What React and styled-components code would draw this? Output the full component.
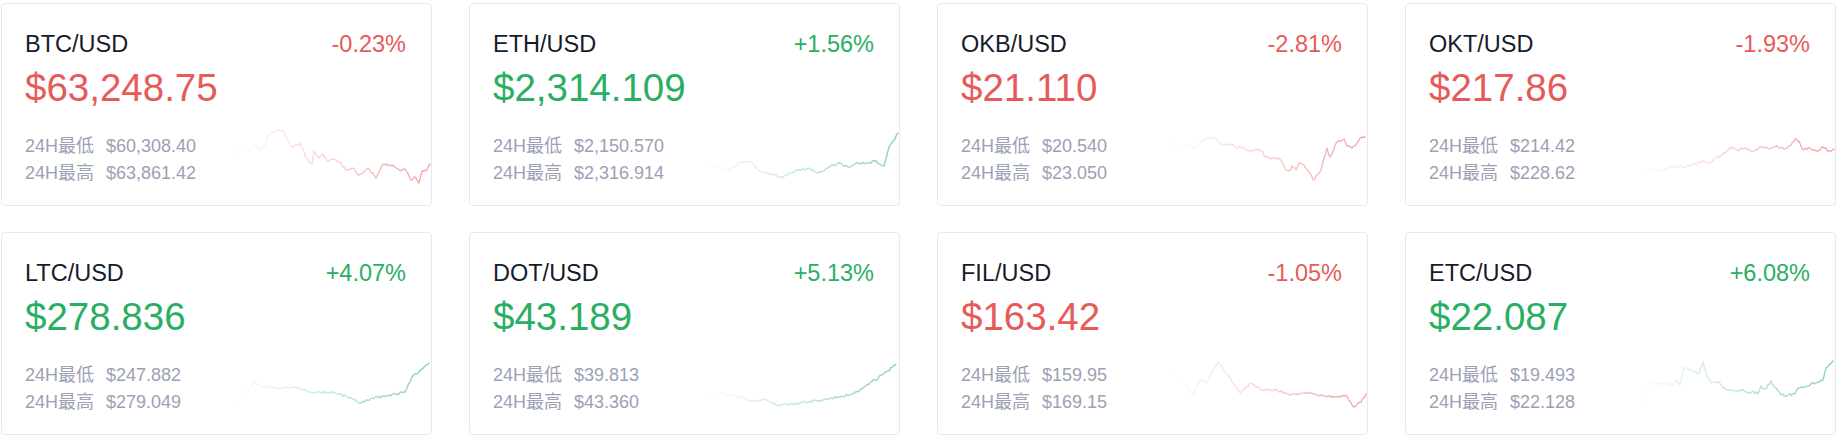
import React from "react";
import styled, { createGlobalStyle } from "styled-components";

const RED = "#e75a5a";
const GREEN = "#2aae64";

const GlobalStyle = createGlobalStyle`
  html, body {
    margin: 0;
    padding: 0;
    background: #ffffff;
  }
  body {
    font-family: "Liberation Sans", "Noto Sans CJK SC", Arial, sans-serif;
  }
`;

const tickers = [
  {
    pair: "BTC/USD", change: "-0.23%", price: "$63,248.75", low: "$60,308.40", high: "$63,861.42", up: false,
    pts: [[0,35],[10,20],[15,19],[20,24],[25,18],[29,24],[33,19],[40,5],[52,3],[58,16],[62,20],[69,16],[76,32],[81,37],[83,24],[88,31],[92,27],[96,34],[103,32],[110,36],[115,43],[122,41],[128,48],[137,41],[145,51],[152,37],[163,39],[170,44],[174,42],[180,53],[184,50],[188,56],[191,44],[195,44],[199,37]],
  },
  {
    pair: "ETH/USD", change: "+1.56%", price: "$2,314.109", low: "$2,150.570", high: "$2,316.914", up: true,
    pts: [[0,41],[15,38],[29,43],[42,35],[52,35],[62,45],[75,48],[82,50],[92,46],[102,43],[109,41],[119,46],[129,41],[139,36],[149,40],[159,36],[172,36],[175,34],[180,37],[185,39],[190,20],[195,13],[199,6]],
  },
  {
    pair: "OKB/USD", change: "-2.81%", price: "$21.110", low: "$20.540", high: "$23.050", up: false,
    pts: [[0,11],[4,20],[7,16],[12,23],[19,21],[22,17],[27,22],[32,16],[39,12],[47,10],[50,12],[54,18],[59,18],[64,17],[69,20],[75,21],[82,24],[89,22],[94,24],[99,30],[105,31],[112,31],[119,43],[124,43],[125,39],[129,43],[132,36],[137,38],[142,45],[146,53],[154,43],[160,21],[163,30],[170,15],[177,12],[180,19],[185,21],[190,16],[195,10],[198,10]],
  },
  {
    pair: "OKT/USD", change: "-1.93%", price: "$217.86", low: "$214.42", high: "$228.62", up: false,
    pts: [[0,46],[12,42],[25,44],[38,39],[50,40],[60,37],[68,34],[75,36],[82,30],[90,26],[96,20],[102,23],[110,21],[118,24],[126,20],[134,22],[142,19],[150,22],[156,18],[160,12],[164,14],[167,22],[175,21],[182,24],[188,20],[194,24],[199,22]],
  },
  {
    pair: "LTC/USD", change: "+4.07%", price: "$278.836", low: "$247.882", high: "$279.049", up: true,
    pts: [[0,54],[9,44],[24,26],[31,31],[42,31],[49,32],[67,32],[83,37],[101,36],[115,40],[130,47],[141,42],[156,40],[174,36],[181,21],[188,16],[198,7]],
  },
  {
    pair: "DOT/USD", change: "+5.13%", price: "$43.189", low: "$39.813", high: "$43.360", up: true,
    pts: [[0,46],[23,37],[37,40],[52,45],[66,43],[77,49],[95,48],[110,46],[124,44],[139,41],[154,38],[165,31],[176,24],[187,16],[197,9]],
  },
  {
    pair: "FIL/USD", change: "-1.05%", price: "$163.42", low: "$159.95", high: "$169.15", up: false,
    pts: [[1,14],[8,21],[15,24],[26,39],[33,24],[40,27],[51,6],[62,21],[73,37],[84,27],[95,34],[110,34],[124,39],[139,37],[154,39],[168,41],[179,39],[187,51],[194,46],[199,38]],
  },
  {
    pair: "ETC/USD", change: "+6.08%", price: "$22.087", low: "$19.493", high: "$22.128", up: true,
    pts: [[3,52],[13,31],[19,25],[24,29],[32,27],[37,30],[41,25],[45,29],[49,12],[54,13],[59,16],[64,17],[68,6],[71,17],[76,27],[83,26],[88,32],[94,34],[101,36],[106,34],[113,37],[118,35],[123,38],[126,30],[130,33],[136,25],[141,32],[146,39],[153,39],[160,38],[163,32],[170,31],[176,28],[183,26],[188,24],[191,12],[198,5]],
  },
];

// jagged line through the key points, seeded so every render is the same
const buildPath = (pts, seed) => {
  let s = seed * 9301 + 49297;
  const rnd = () => {
    s = (s * 9301 + 49297) % 233280;
    return s / 233280;
  };
  const out = [];
  for (let i = 0; i < pts.length - 1; i++) {
    const [x0, y0] = pts[i];
    const [x1, y1] = pts[i + 1];
    const steps = Math.max(1, Math.round((x1 - x0) / 1.6));
    for (let k = 0; k < steps; k++) {
      const t = k / steps;
      const jitter = k === 0 ? 0 : (rnd() - 0.5) * 2.4;
      out.push([x0 + (x1 - x0) * t, y0 + (y1 - y0) * t + jitter]);
    }
  }
  out.push(pts[pts.length - 1]);
  return out.map(([x, y], i) => `${i ? "L" : "M"}${x.toFixed(1)},${y.toFixed(1)}`).join(" ");
};

const Grid = styled.div`
  display: grid;
  grid-template-columns: repeat(4, 431px);
  column-gap: 37px;
  row-gap: 26px;
  padding: 3px 0 0 1px;
`;

const Card = styled.div`
  box-sizing: border-box;
  height: 203px;
  padding: 26px 25px 0 23px;
  border: 1px solid #e8e9ef;
  border-radius: 4px;
  background: #fff;
  display: flex;
  flex-direction: column;
`;

const Header = styled.div`
  display: flex;
  justify-content: space-between;
  align-items: baseline;
  font-size: 23.5px;
  line-height: 28px;
`;

const Pair = styled.span`
  color: #161b2c;
`;

const Change = styled.span`
  color: ${({ $up }) => ($up ? GREEN : RED)};
`;

const Price = styled.div`
  margin-top: 7px;
  font-size: 38.5px;
  line-height: 46px;
  color: ${({ $up }) => ($up ? GREEN : RED)};
`;

const Bottom = styled.div`
  margin-top: 22px;
  display: flex;
  align-items: flex-start;
`;

const Stats = styled.div`
  flex: 1;
  display: flex;
  flex-direction: column;
`;

const StatLine = styled.div`
  display: flex;
  gap: 12px;
  font-size: 18px;
  line-height: 26.7px;
  color: #9ca1b5;
`;

const Chart = styled.svg`
  flex-shrink: 0;
  width: 200px;
  height: 60px;
  margin-top: -6px;
  margin-right: -25px;
  display: block;
`;

const Sparkline = ({ pts, up, id }) => {
  const color = up ? GREEN : RED;
  return (
    <Chart viewBox="0 0 200 60">
      <defs>
        <linearGradient id={id} gradientUnits="userSpaceOnUse" x1="0" y1="0" x2="200" y2="0">
          <stop offset="0" stopColor={color} stopOpacity="0" />
          <stop offset="1" stopColor={color} stopOpacity="0.55" />
        </linearGradient>
      </defs>
      <path
        d={buildPath(pts, id.length * 17 + pts.length)}
        fill="none"
        stroke={`url(#${id})`}
        strokeWidth="1.4"
        strokeLinejoin="round"
        strokeLinecap="round"
      />
    </Chart>
  );
};

const TickerCard = ({ t, idx }) => (
  <Card>
    <Header>
      <Pair>{t.pair}</Pair>
      <Change $up={t.up}>{t.change}</Change>
    </Header>
    <Price $up={t.up}>{t.price}</Price>
    <Bottom>
      <Stats>
        <StatLine>
          <span>24H最低</span>
          <span>{t.low}</span>
        </StatLine>
        <StatLine>
          <span>24H最高</span>
          <span>{t.high}</span>
        </StatLine>
      </Stats>
      <Sparkline pts={t.pts} up={t.up} id={`spark-${idx}`} />
    </Bottom>
  </Card>
);

const App = () => (
  <>
    <GlobalStyle />
    <Grid>
      {tickers.map((t, i) => (
        <TickerCard key={t.pair} t={t} idx={i} />
      ))}
    </Grid>
  </>
);

export default App;
